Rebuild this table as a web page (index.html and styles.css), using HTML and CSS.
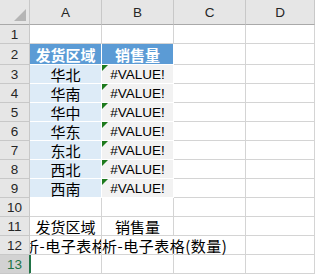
FILE: index.html
```html
<!DOCTYPE html>
<html lang="zh-CN">
<head>
<meta charset="utf-8">
<title>Sheet</title>
<link rel="stylesheet" href="styles.css">
</head>
<body>
<div class="sheet">
  <div class="hd corner"><svg width="12" height="12" viewBox="0 0 12 12"><polygon points="12,0 12,12 0,12" fill="#b5b5b5"/></svg></div>
  <div class="hd col">A</div>
  <div class="hd col">B</div>
  <div class="hd col">C</div>
  <div class="hd col last">D</div>

  <div class="rh">1</div><div class="c"></div><div class="c"></div><div class="c"></div><div class="c last"></div>

  <div class="rh">2</div><div class="c th">发货区域</div><div class="c th">销售量</div><div class="c"></div><div class="c last"></div>

  <div class="rh">3</div><div class="c reg">华北</div><div class="c err">#VALUE!</div><div class="c"></div><div class="c last"></div>
  <div class="rh">4</div><div class="c reg">华南</div><div class="c err">#VALUE!</div><div class="c"></div><div class="c last"></div>
  <div class="rh">5</div><div class="c reg">华中</div><div class="c err">#VALUE!</div><div class="c"></div><div class="c last"></div>
  <div class="rh">6</div><div class="c reg">华东</div><div class="c err">#VALUE!</div><div class="c"></div><div class="c last"></div>
  <div class="rh">7</div><div class="c reg">东北</div><div class="c err">#VALUE!</div><div class="c"></div><div class="c last"></div>
  <div class="rh">8</div><div class="c reg">西北</div><div class="c err">#VALUE!</div><div class="c"></div><div class="c last"></div>
  <div class="rh">9</div><div class="c reg">西南</div><div class="c err">#VALUE!</div><div class="c"></div><div class="c last"></div>

  <div class="rh">10</div><div class="c"></div><div class="c"></div><div class="c"></div><div class="c last"></div>

  <div class="rh">11</div><div class="c">发货区域</div><div class="c">销售量</div><div class="c"></div><div class="c last"></div>

  <div class="rh">12</div><div class="c clipped"><span>数据分析-电子表格(区域)</span></div><div class="c spill"><span>数据分析-电子表格(数量)</span></div><div class="c"></div><div class="c last"></div>

  <div class="rh active">13</div><div class="c sel"></div><div class="c"></div><div class="c"></div><div class="c last"></div>
</div>
</body>
</html>
```

FILE: styles.css
```css
html, body {
  margin: 0;
  padding: 0;
  background: #ffffff;
}

.sheet {
  display: grid;
  grid-template-columns: 30px 72px 72px 72px 69px;
  grid-template-rows: 25px 19px 21px repeat(10, 19px) 19px;
  width: 315px;
  height: 274px;
  overflow: hidden;
  font-family: "Noto Sans CJK SC", "Liberation Sans", sans-serif;
  font-size: 15px;
  color: #000;
}

.sheet > div {
  box-sizing: border-box;
  display: flex;
  align-items: center;
  justify-content: center;
  white-space: nowrap;
  min-width: 0;
}

.hd {
  background: #e6e6e6;
  border-right: 1px solid #c8c8c8;
  border-bottom: 1px solid #a9a9a9;
  font-family: "Liberation Sans", sans-serif;
  font-size: 13.5px;
  color: #262626;
  padding-top: 1px;
}

.corner {
  justify-content: flex-end !important;
  align-items: flex-end !important;
  padding: 0 3px 3px 0;
}

.rh {
  background: #e6e6e6;
  border-right: 1px solid #c8c8c8;
  border-bottom: 1px solid #c8c8c8;
  font-family: "Liberation Sans", sans-serif;
  font-size: 13.5px;
  color: #262626;
  padding-top: 1px;
}

.rh.active {
  background: #d2d2d2;
  color: #217346;
  border-right: 1px solid #217346;
}

.c {
  background: #ffffff;
  border-right: 1px solid #d4d4d4;
  border-bottom: 1px solid #d4d4d4;
}

.th {
  background: #5b9bd5;
  color: #ffffff;
  font-weight: bold;
  border-right-color: #ffffff;
  border-bottom-color: #ffffff;
}

.reg {
  background: #ddebf7;
  border-right-color: #ffffff;
  border-bottom-color: #ffffff;
}

.err {
  position: relative;
  background: #f2f2f2;
  border-right-color: #ffffff;
  border-bottom-color: #ffffff;
  font-family: "Liberation Sans", sans-serif;
  font-size: 13.5px;
}

.err::before {
  content: "";
  position: absolute;
  left: 0;
  top: 0;
  border-top: 6px solid #1d7a1d;
  border-right: 6px solid transparent;
}

.clipped {
  overflow: hidden;
}

.clipped span {
  letter-spacing: 0.5px;
  padding-right: 4px;
}

.spill {
  position: relative;
  z-index: 1;
  overflow: visible;
  border-right-color: #ffffff !important;
  clip-path: inset(0 -200px 0 0);
}

.spill span {
  letter-spacing: 0.5px;
  padding-left: 8px;
}

.sel {
  box-shadow: inset 1px 0 0 #217346;
}
```
